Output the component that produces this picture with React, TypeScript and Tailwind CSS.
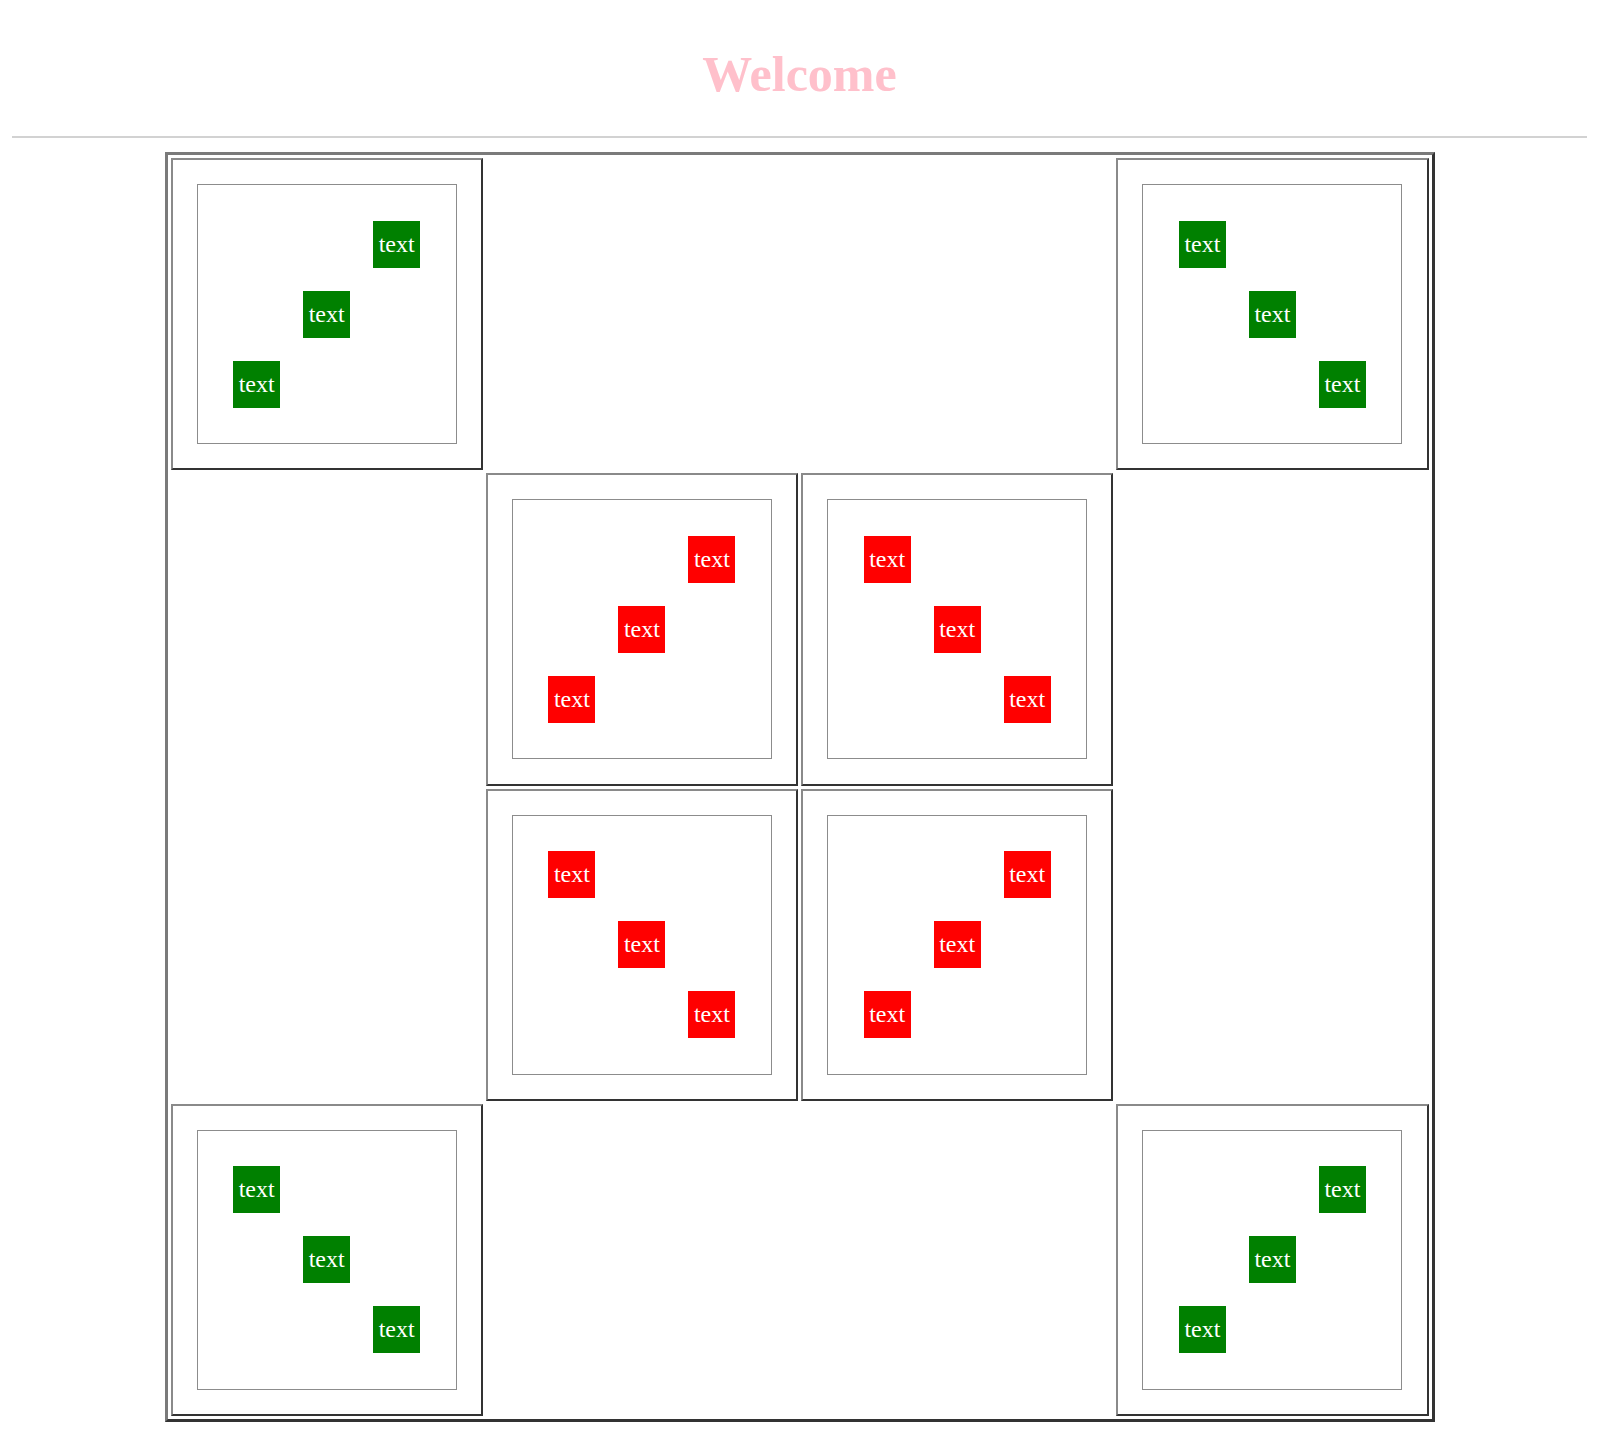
import React from "react";

type Kind = "main" | "anti";

function Box({ color }: { color: "green" | "red" }) {
  return (
    <div
      className={
        "w-[47px] h-[47px] flex items-center justify-center text-white text-[24px] leading-none " +
        (color === "green" ? "bg-[#008000]" : "bg-[#ff0000]")
      }
    >
      <span className="-mt-[1px]">text</span>
    </div>
  );
}

function Cell({ kind, color }: { kind: Kind; color: "green" | "red" }) {
  const pos =
    kind === "main"
      ? ["col-start-1 row-start-1", "col-start-2 row-start-2", "col-start-3 row-start-3"]
      : ["col-start-3 row-start-1", "col-start-2 row-start-2", "col-start-1 row-start-3"];
  return (
    <div className="w-full h-full flex items-center justify-center border-2 border-t-[#8a8a8a] border-l-[#8a8a8a] border-b-[#333333] border-r-[#333333]">
      <div className="w-[260px] h-[260px] border border-[#8c8c8c] flex items-center justify-center">
        <div className="grid grid-cols-[47px_47px_47px] grid-rows-[47px_47px_47px] gap-[23px]">
          {pos.map((p, i) => (
            <div key={i} className={p}>
              <Box color={color} />
            </div>
          ))}
        </div>
      </div>
    </div>
  );
}

function Empty() {
  return <div className="w-full h-full" />;
}

export default function App() {
  return (
    <div className="min-h-[1435px] bg-white font-['Liberation_Serif','Times_New_Roman',serif]">
      <h1 className="pt-[46px] text-center text-[50px] leading-[57px] font-bold text-[#ffc0cb]">
        Welcome
      </h1>
      <div className="mx-[12px] mt-[33px] h-[2px] bg-[#d2d2d2]" />
      <div className="mt-[14px] flex justify-center">
        <div className="w-[1270px] h-[1270px] border-[3px] border-t-[#7a7a7a] border-l-[#7a7a7a] border-b-[#333333] border-r-[#333333] p-[3px] grid grid-cols-4 grid-rows-4 gap-[3px]">
          <Cell kind="anti" color="green" />
          <Empty />
          <Empty />
          <Cell kind="main" color="green" />

          <Empty />
          <Cell kind="anti" color="red" />
          <Cell kind="main" color="red" />
          <Empty />

          <Empty />
          <Cell kind="main" color="red" />
          <Cell kind="anti" color="red" />
          <Empty />

          <Cell kind="main" color="green" />
          <Empty />
          <Empty />
          <Cell kind="anti" color="green" />
        </div>
      </div>
    </div>
  );
}
